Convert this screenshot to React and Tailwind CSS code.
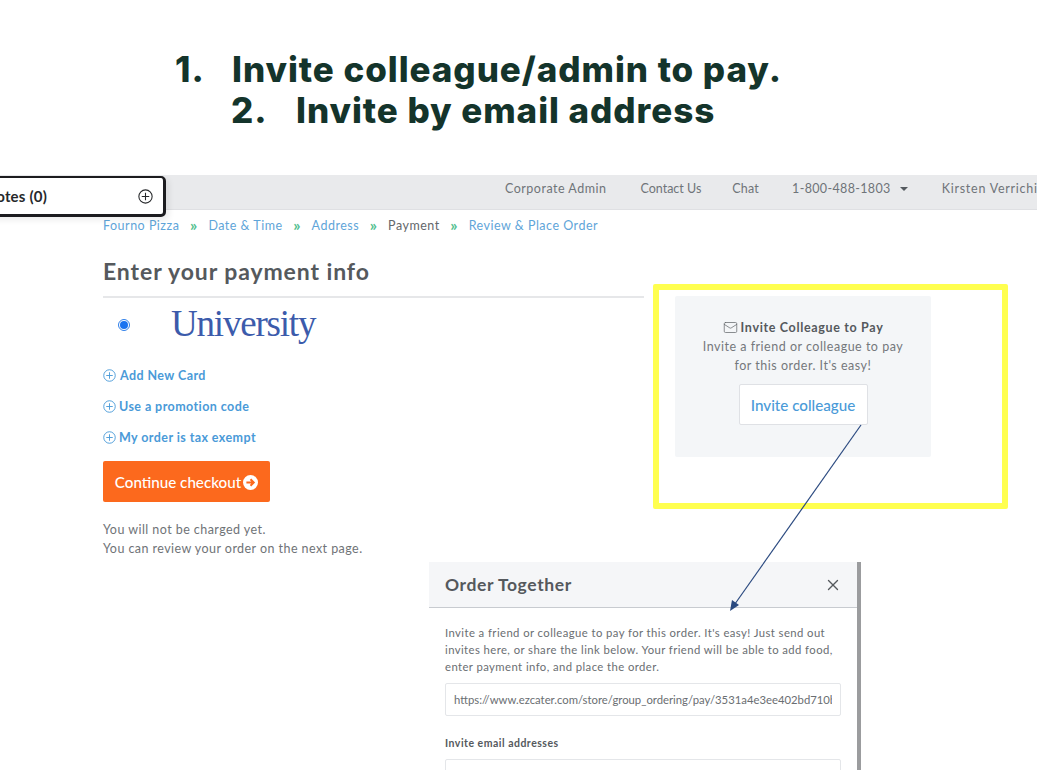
import React from 'react';
import { Mail, X } from 'lucide-react';

const LATO = 'font-["Lato","Open_Sans",sans-serif]';

const PlusCircle = ({ className }) => (
  <svg className={className} viewBox="0 0 14 14" fill="none" stroke="currentColor" strokeWidth="1">
    <circle cx="7" cy="7" r="6.2" />
    <path d="M7 3.5v7M3.5 7h7" />
  </svg>
);

const Crumb = ({ children }) => <span className="text-[#5fa5d9]">{children}</span>;
const Sep = () => <span className="w-[9px] text-center text-[16px] leading-[16px] -mt-[2px] text-[#52c08f] font-bold">»</span>;

const OptionLink = ({ label, gap }) => (
  <div className={`flex items-center ${gap} h-[16px] text-[#4a9ad8] font-bold text-[12.5px] tracking-[0.42px]`}>
    <PlusCircle className="w-[13px] h-[13px] shrink-0 -mt-[1px]" />
    <span>{label}</span>
  </div>
);

export default function App() {
  return (
    <div className={`relative w-[1058px] h-[770px] overflow-hidden bg-white ${LATO}`}>
      {/* Slide title */}
      <div className='pt-[49px] h-[175px] font-["Inter",sans-serif] font-extrabold text-[#14342b] text-[35px] leading-[41px] tracking-[0.95px]'>
        <div className="flex pl-[175px]">
          <span className="w-[57px]">1.</span>
          <span>Invite colleague/admin to pay.</span>
        </div>
        <div className="flex pl-[231px]">
          <span className="w-[65px]">2.</span>
          <span>Invite by email address</span>
        </div>
      </div>

      {/* Top nav from the pasted screenshot */}
      <div className="w-[1037px] h-[35px] pb-[6px] bg-[#e9eaec] border-b border-[#dfe0e3] overflow-hidden flex items-center pl-[505px] text-[12.5px] tracking-[0.5px] text-[#6f7479] whitespace-nowrap">
        <span>Corporate Admin</span>
        <span className="ml-[34px] tracking-[0px]">Contact Us</span>
        <span className="ml-[31px] tracking-[0.2px]">Chat</span>
        <span className="ml-[33px] tracking-[0.35px]">1-800-488-1803</span>
        <span className="ml-[9px] w-0 h-0 border-x-[4px] border-x-transparent border-t-[4px] border-t-[#555a5f]" />
        <span className="ml-[34px] tracking-[0.75px]">Kirsten Verrichi</span>
      </div>

      <div className="flex items-start pl-[103px]">
        {/* Payment column */}
        <div className="w-[541px]">
          <div className="flex items-center gap-[10px] h-[31px] pt-[1px] text-[12.5px] tracking-[0.5px]">
            <Crumb>Fourno Pizza</Crumb>
            <Sep />
            <Crumb>Date &amp; Time</Crumb>
            <Sep />
            <Crumb>Address</Crumb>
            <Sep />
            <span className="text-[#63676b]">Payment</span>
            <Sep />
            <Crumb>Review &amp; Place Order</Crumb>
          </div>
          <h1 className="mt-[15px] h-[42px] border-b-2 border-[#e6e7e9] text-[23px] leading-[30px] font-bold tracking-[0.9px] text-[#55595d]">
            Enter your payment info
          </h1>
          <div className="flex items-center h-[54px]">
            <span className="ml-[15px] w-[12px] h-[12px] rounded-full border border-[#2f7fea] flex items-center justify-center">
              <span className="w-[8px] h-[8px] rounded-full bg-[#1a73f0]" />
            </span>
            <span className='ml-[41px] -mt-[3px] font-["Liberation_Serif",serif] text-[37px] leading-[40px] tracking-[-1.2px] text-[#3c5bab]'>University</span>
          </div>
          <div className="mt-[16px] flex flex-col gap-[15px]">
            <OptionLink label="Add New Card" gap="gap-[4px]" />
            <OptionLink label="Use a promotion code" gap="gap-[3px]" />
            <OptionLink label="My order is tax exempt" gap="gap-[3px]" />
          </div>
          <button className="mt-[15px] w-[167px] h-[41px] pt-[1px] rounded-[2px] bg-[#fc691d] text-white text-[15.2px] font-medium flex items-center justify-center gap-[2px]">
            <span>Continue checkout</span>
            <span className="w-[15px] h-[15px] rounded-full bg-white flex items-center justify-center">
              <svg viewBox="0 0 12 12" className="w-[11px] h-[11px]" fill="none" stroke="#fc691d" strokeWidth="2.2">
                <path d="M1.5 6h8M6 2.5 9.5 6 6 9.5" />
              </svg>
            </span>
          </button>
          <p className="mt-[18px] text-[12.5px] leading-[19px] tracking-[0.44px] text-[#6f7377]">
            You will not be charged yet.
            <br />
            You can review your order on the next page.
          </p>
        </div>

        {/* Invite card */}
        <div className="ml-[31px] mt-[86px] w-[256px] h-[161px] rounded-[2px] bg-[#f4f6f8] pt-[22px] flex flex-col items-center text-[12.5px] leading-[19px] tracking-[0.5px] text-[#74787c]">
          <div className="flex items-center gap-[3px] font-bold tracking-[0.66px] text-[#55595d]">
            <Mail className="w-[15px] h-[15px] text-[#666a6e]" strokeWidth={1.2} />
            <span>Invite Colleague to Pay</span>
          </div>
          <span>Invite a friend or colleague to pay</span>
          <span>for this order. It's easy!</span>
          <div className="mt-[9px] w-[129px] h-[41px] pt-[1px] rounded-[2px] bg-white border border-[#dfe1e5] flex items-center justify-center text-[15.2px] font-medium tracking-normal text-[#4a9ad8]">
            Invite colleague
          </div>
        </div>
      </div>

      {/* Notes pill pasted over the nav */}
      <div className="absolute left-[-10px] top-[176px] w-[176px] h-[41px] rounded-[5px] border-2 border-b-[3px] border-r-[3px] border-[#1c1c1f] bg-white shadow-[3px_3px_6px_rgba(0,0,0,0.08)] flex items-center justify-between pr-[10px]">
        <span className="-ml-[3px] text-[15px] font-bold tracking-[0.2px] text-[#26282b] w-[58px] overflow-hidden flex justify-end whitespace-nowrap">otes (0)</span>
        <PlusCircle className="w-[15px] h-[15px] text-[#26282b]" />
      </div>

      {/* Yellow highlight */}
      <div className="absolute left-[653px] top-[284px] w-[355px] h-[225px] rounded-[2px] border-[6px] border-[#ffff4f]" />

      {/* Order Together modal */}
      <div className="absolute left-[429px] top-[562px] w-[432px] h-[208px] bg-white border-r-[4px] border-[#9b9c9e] text-[#6a6e72]">
        <div className="h-[46px] pt-[1px] bg-[#f5f6f8] border-b border-[#c8cbd0] flex items-center justify-between pl-[16px] pr-[15px]">
          <span className="text-[17.5px] font-bold tracking-[0.6px] text-[#55595d]">Order Together</span>
          <X className="w-[18px] h-[18px] text-[#55595d]" strokeWidth={1.8} />
        </div>
        <p className="mt-[16px] ml-[16px] w-[400px] text-[11.3px] leading-[17px] tracking-[0.42px]">
          Invite a friend or colleague to pay for this order. It's easy! Just send out invites here, or share the link below. Your friend will be able to add food, enter payment info, and place the order.
        </p>
        <div className="mt-[8px] ml-[16px] w-[396px] h-[33px] pt-[1px] rounded-[2px] border border-[#e4e6e9] flex items-center pl-[8px] pr-[8px] overflow-hidden whitespace-nowrap text-[11.3px]">
          <span className="overflow-hidden">https://www.ezcater.com/store/group_ordering/pay/3531a4e3ee402bd710b</span>
        </div>
        <div className="mt-[20px] ml-[16px] text-[10.5px] font-bold tracking-[0.5px] text-[#55595d]">Invite email addresses</div>
        <div className="mt-[7px] ml-[16px] w-[396px] h-[20px] rounded-t-[2px] border border-[#e4e6e9]" />
      </div>

      {/* Arrow from the button to the modal */}
      <svg className="absolute inset-0 pointer-events-none" width="1058" height="770" fill="none">
        <path d="M861 425 733.5 606" stroke="#2b4a80" strokeWidth="1.2" />
        <path d="M730 611l2-11 7 5z" fill="#2b4a80" />
      </svg>
    </div>
  );
}
